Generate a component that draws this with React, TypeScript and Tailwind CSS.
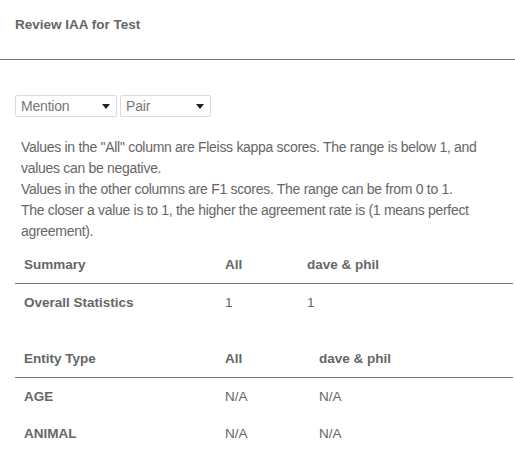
import React from "react";

function Select({ label, width }: { label: string; width: string }) {
  return (
    <div
      className={`${width} h-[22px] border border-[#dcdcdc] rounded-[2px] bg-white flex items-center justify-between pl-[5px] pr-[6px]`}
    >
      <span className="text-[14px] leading-[20px] text-[#777] tracking-[-0.2px]">{label}</span>
      <svg width="8" height="5" viewBox="0 0 8 5" className="mt-[1px]">
        <path d="M0 0 L8 0 L4 5 Z" fill="#222" />
      </svg>
    </div>
  );
}

function Table({
  cols,
  head,
  rows,
  className,
}: {
  cols: string;
  head: string[];
  rows: string[][];
  className?: string;
}) {
  return (
    <div className={`ml-[15px] mr-[2px] ${className ?? ""}`}>
      <div className={`grid ${cols} h-[37px] items-center border-b border-[#777] text-[13.5px] font-bold text-[#666]`}>
        {head.map((h, i) => (
          <div key={i} className="pl-[9px] leading-[20px]">
            {h}
          </div>
        ))}
      </div>
      {rows.map((r, ri) => (
        <div key={ri} className={`grid ${cols} h-[37px] items-center text-[13.5px] text-[#666]`}>
          {r.map((c, ci) => (
            <div key={ci} className={`pl-[9px] leading-[20px] ${ci === 0 ? "font-bold" : ""}`}>
              {c}
            </div>
          ))}
        </div>
      ))}
    </div>
  );
}

export default function App() {
  return (
    <div className="w-[515px] h-[451px] bg-white overflow-hidden font-['Liberation_Sans',Arial,sans-serif] text-[#666]">
      <div className="h-[59px] px-[15px] pt-[17px]">
        <h4 className="text-[13.5px] font-bold leading-[16px] text-[#666]">Review IAA for Test</h4>
      </div>
      <div className="border-t border-[#777]" />
      <div className="pt-[35px] px-[15px] flex gap-[3px]">
        <Select label="Mention" width="w-[102px]" />
        <Select label="Pair" width="w-[91px]" />
      </div>
      <p className="mt-[20px] pl-[21px] pr-[10px] text-[14px] leading-[21px] tracking-[-0.3px] text-[#666]">
        Values in the "All" column are Fleiss kappa scores. The range is below 1, and values can be negative.
        <br />
        Values in the other columns are F1 scores. The range can be from 0 to 1.
        <br />
        The closer a value is to 1, the higher the agreement rate is (1 means perfect agreement).
      </p>
      <Table
        className="mt-[5px]"
        cols="grid-cols-[201px_82px_1fr]"
        head={["Summary", "All", "dave & phil"]}
        rows={[["Overall Statistics", "1", "1"]]}
      />
      <Table
        className="mt-[20px]"
        cols="grid-cols-[201px_94px_1fr]"
        head={["Entity Type", "All", "dave & phil"]}
        rows={[
          ["AGE", "N/A", "N/A"],
          ["ANIMAL", "N/A", "N/A"],
        ]}
      />
    </div>
  );
}
